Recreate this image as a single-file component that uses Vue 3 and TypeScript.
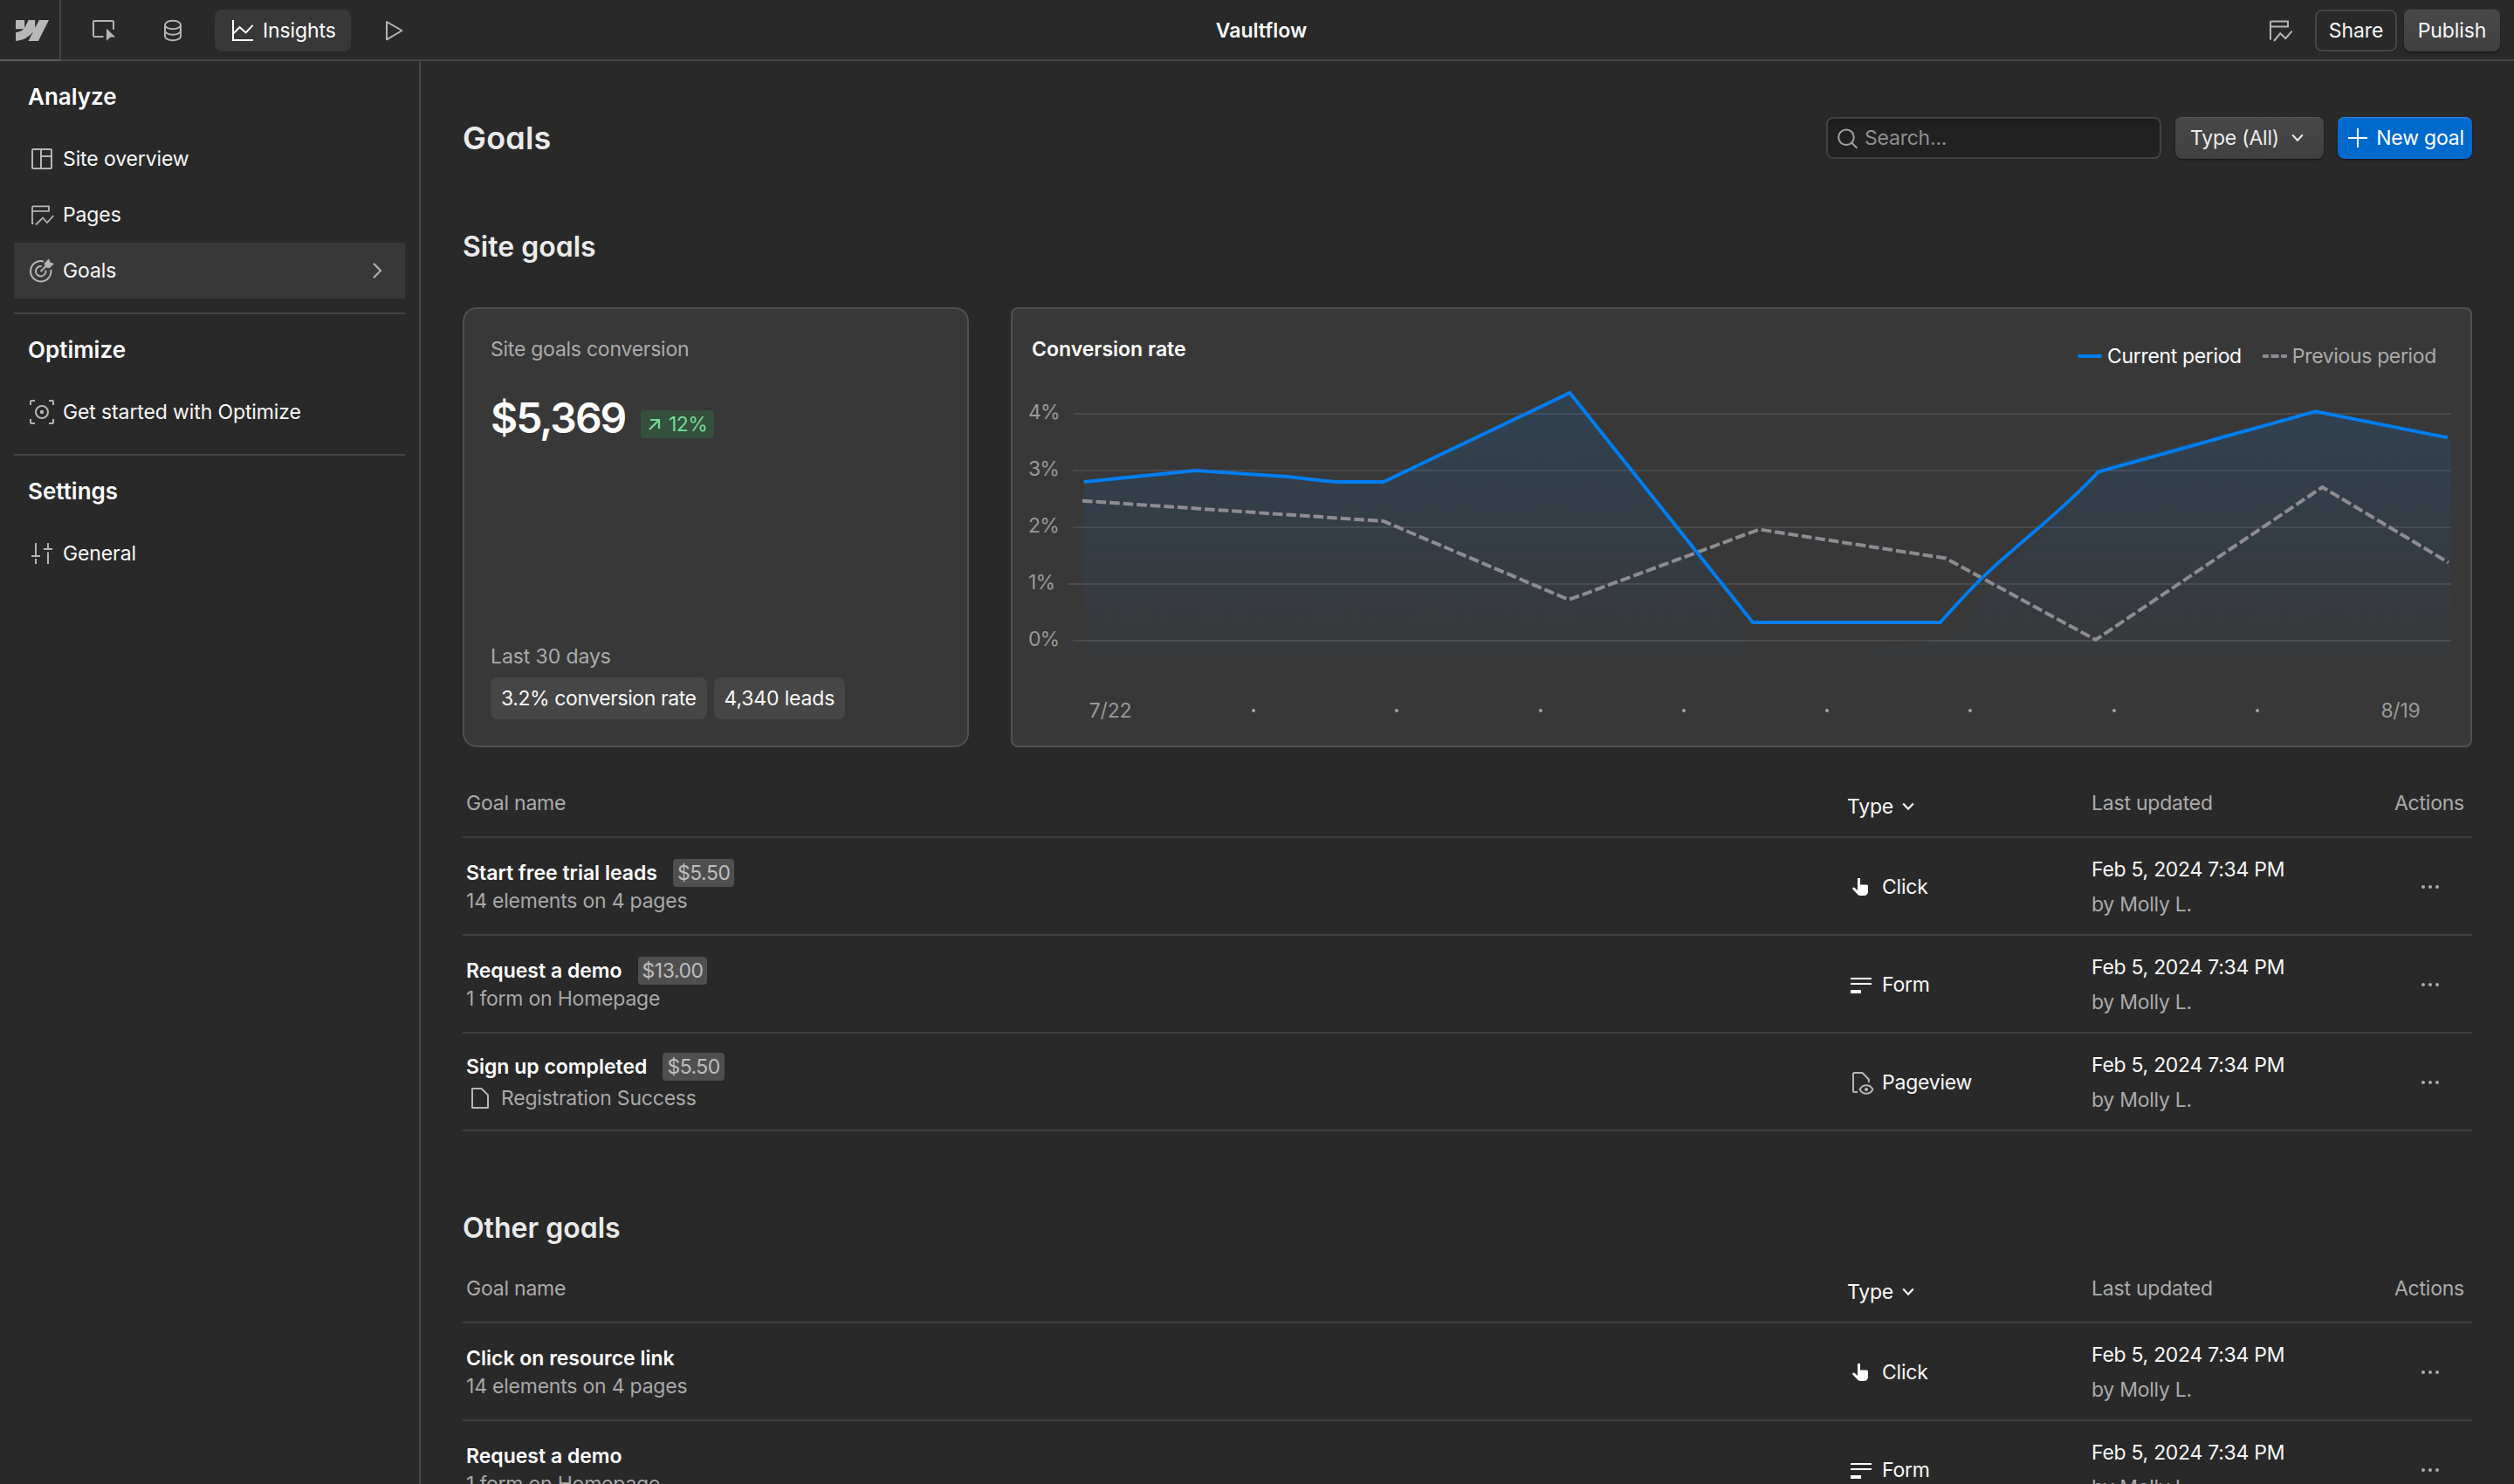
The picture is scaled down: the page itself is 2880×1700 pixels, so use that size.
<script setup lang="ts">
type GoalKind = 'Click' | 'Form' | 'Pageview'

interface Goal {
  name: string
  detail: string
  kind: GoalKind
  value?: string
  page?: boolean
}

interface GoalTable {
  id: string
  title: string | null
  goals: Goal[]
}

interface NavItem {
  label: string
  icon: string
  active?: boolean
}

const nav: { title: string; items: NavItem[] }[] = [
  {
    title: 'Analyze',
    items: [
      { label: 'Site overview', icon: 'layout' },
      { label: 'Pages', icon: 'pages' },
      { label: 'Goals', icon: 'goal', active: true },
    ],
  },
  { title: 'Optimize', items: [{ label: 'Get started with Optimize', icon: 'optimize' }] },
  { title: 'Settings', items: [{ label: 'General', icon: 'sliders' }] },
]

const tables: GoalTable[] = [
  {
    id: 'site',
    title: null,
    goals: [
      { name: 'Start free trial leads', detail: '14 elements on 4 pages', kind: 'Click', value: '$5.50' },
      { name: 'Request a demo', detail: '1 form on Homepage', kind: 'Form', value: '$13.00' },
      { name: 'Sign up completed', detail: 'Registration Success', kind: 'Pageview', value: '$5.50', page: true },
    ],
  },
  {
    id: 'other',
    title: 'Other goals',
    goals: [
      { name: 'Click on resource link', detail: '14 elements on 4 pages', kind: 'Click' },
      { name: 'Request a demo', detail: '1 form on Homepage', kind: 'Form' },
    ],
  },
]

const ticks = ['4%', '3%', '2%', '1%', '0%']
const dates = ['7/22', '', '', '', '', '', '', '', '', '8/19']
</script>

<template>
  <div class="app">
    <header class="topbar">
      <div class="brand">
        <svg width="38" height="24" viewBox="0 0 1080 674" preserveAspectRatio="none" fill="#b8b8b8">
          <path d="M1080 0L735.4 673.7H411.7L555.9 394.5H549.4C430.5 548.9 253 650.6 0 673.7V398.3S161.8 388.8 256.9 288.8H0V0H288.8V237.5H295.3L413.3 0H631.6V236H638.1L760.6 0Z" />
        </svg>
      </div>
      <div class="tools">
        <svg class="ic t1" viewBox="0 0 32 32">
          <path d="M28 14.7V6a1 1 0 0 0-1-1H6a1 1 0 0 0-1 1v16a1 1 0 0 0 1 1h10.5" />
          <path class="solid" d="M20 13.8v14l4.6-4.2 5.6-.2z" />
        </svg>
        <svg class="ic t2" viewBox="0 0 32 32">
          <ellipse cx="16" cy="9.5" rx="9" ry="4.7" />
          <path d="M7 9.5v13c0 2.6 4 4.7 9 4.7s9-2.1 9-4.7v-13M7 16c0 2.600 4 4.700 9 4.700s9-2.100 9-4.700" />
        </svg>
        <div class="tab">
          <svg class="ic white" viewBox="0 0 32 32">
            <path d="M5 4v23h23M5.300 19.200l7.300-7 7 6.200 8-8.500" />
          </svg>
          <span>Insights</span>
        </div>
        <svg class="ic t3" viewBox="0 0 32 32">
          <path stroke-linejoin="round" d="M9 6v20.300L26.500 16z" />
        </svg>
      </div>
      <div class="site-name">Vaultflow</div>
      <div class="right">
        <svg class="ic" viewBox="0 0 32 32">
          <path d="M5 26.500V6.500a1 1 0 0 1 1-1h19v6H5M9 28l7.300-8.700 6 5.700 7.300-8.300" />
        </svg>
        <button class="btn outline">Share</button>
        <button class="btn raised publish">Publish</button>
      </div>
    </header>

    <div class="body">
      <nav class="sidebar">
        <section v-for="group in nav" :key="group.title">
          <h2>{{ group.title }}</h2>
          <div v-for="item in group.items" :key="item.label" class="nav-item" :class="{ active: item.active }">
            <svg class="ic" viewBox="0 0 32 32">
              <path v-if="item.icon === 'layout'" d="M6 5h20a1 1 0 0 1 1 1v20a1 1 0 0 1-1 1H6a1 1 0 0 1-1-1V6a1 1 0 0 1 1-1zM15 5v22M15 13h12" />
              <path v-else-if="item.icon === 'pages'" stroke-width="1.8" d="M6.300 26H5V7.300a1 1 0 0 1 1-1h18v5.500H5M9 27.500l8-8 5 5.500 7.300-8" />
              <template v-else-if="item.icon === 'goal'">
                <path d="M18 5.500A11.700 11.700 0 1 0 26.300 15M15.800 11A5.800 5.800 0 1 0 20.400 15.600M14.500 17l6.500-6.500" />
                <path class="solid" d="M18.700 7.700L24 2.300l1.500 4.200L30 8l-5.300 5.300-5-1z" />
              </template>
              <template v-else-if="item.icon === 'optimize'">
                <path d="M3 8V4a1 1 0 0 1 1-1h4M24 3h4a1 1 0 0 1 1 1v4M29 24v4a1 1 0 0 1-1 1h-4M8 29H4a1 1 0 0 1-1-1v-4" />
                <circle cx="16" cy="16" r="7" />
                <circle class="solid" cx="16" cy="16" r="2.200" />
              </template>
              <path v-else d="M9 4v15M4 19h10M9 22v6M23 4v7M18 11h10M23 14.500V28" />
            </svg>
            <span>{{ item.label }}</span>
            <svg v-if="item.active" class="ic caret" viewBox="0 0 32 32"><path d="M12 7.800l8 8.200-8 8.200" /></svg>
          </div>
        </section>
      </nav>

      <main class="main">
        <div class="page-head">
          <h1>Goals</h1>
          <label class="search">
            <svg class="ic" viewBox="0 0 32 32"><circle cx="15" cy="15.300" r="8.800" /><path d="M21.300 21.600l6.200 6.200" /></svg>
            <span>Search...</span>
          </label>
          <button class="btn raised filter">
            <span>Type (All)</span>
            <svg width="14" height="10" viewBox="0 0 14 10"><path d="M1.200 1.500L7 7.700l5.800-6.200" /></svg>
          </button>
          <button class="btn primary">
            <svg width="22" height="22" viewBox="0 0 22 22"><path d="M11 0v22M0 11h22" /></svg>
            <span>New goal</span>
          </button>
        </div>

        <h3 class="sub-title">Site goals</h3>

        <div class="cards">
          <section class="card summary">
            <p class="muted">Site goals conversion</p>
            <div class="amount">
              <strong>$5,369</strong>
              <span class="trend">
                <svg width="14" height="14" viewBox="0 0 14 14"><path d="M2 2h10v10M12 2L1 13" /></svg>
                <span>12%</span>
              </span>
            </div>
            <p class="muted last">Last 30 days</p>
            <div class="chips">
              <span class="rate">3.2% conversion rate</span>
              <span>4,340 leads</span>
            </div>
          </section>

          <section class="card chart">
            <div class="chart-head">
              <h4>Conversion rate</h4>
              <div class="legend">
                <svg width="28" height="4" viewBox="0 0 28 4"><rect width="28" height="4" rx="2" fill="#007df0" /></svg>
                <span class="now">Current period</span>
                <svg width="28" height="4" viewBox="0 0 28 4" fill="#8e8c93">
                  <rect width="7" height="4" rx="1" /><rect x="9.500" width="9" height="4" /><rect x="21" width="7" height="4" rx="1" />
                </svg>
                <span class="prev">Previous period</span>
              </div>
            </div>
            <div class="plot">
              <div v-for="t in ticks" :key="t" class="tick"><span>{{ t }}</span><i /></div>
            </div>
            <div class="axis">
              <span v-for="(d, i) in dates" :key="i"><template v-if="d">{{ d }}</template><i v-else /></span>
            </div>
            <svg class="series" viewBox="1160 354 1670 500">
              <defs>
                <linearGradient id="area" gradientUnits="userSpaceOnUse" x1="0" y1="450" x2="0" y2="778">
                  <stop offset="0" stop-color="#007df0" stop-opacity="0.14" />
                  <stop offset="1" stop-color="#007df0" stop-opacity="0" />
                </linearGradient>
              </defs>
              <path fill="url(#area)" d="M1241.600 778V552L1369.600 539L1478 546L1530 551.700H1585L1798.400 450L1943 630L2016 757L2240 731L2292 655L2350 598L2404 535L2652.700 471L2808 503V778Z" />
              <path class="previous" d="M1240 573.700L1584.800 597L1797.200 687L2015.300 606.500L2229 639.500L2400.700 733L2660.500 558L2805 644.500" />
              <path class="current" d="M1241.600 552L1369.600 539L1478 546.300Q1520 551.800 1536 552H1585L1798.400 450L2007.900 713H2222.800Q2265 665 2297 638C2328 610 2362 585 2404 540.500L2652.700 471.300L2804 501.300" />
            </svg>
          </section>
        </div>

        <template v-for="table in tables" :key="table.id">
          <h3 v-if="table.title" class="sub-title other">{{ table.title }}</h3>
          <div class="table" :class="{ first: !table.title }">
            <div class="row head">
              <span>Goal name</span>
              <span class="sort">
                Type
                <svg width="14" height="10" viewBox="0 0 14 10"><path d="M1.200 1.500L7 7.700l5.800-6.200" /></svg>
              </span>
              <span>Last updated</span>
              <span class="actions">Actions</span>
            </div>
            <div v-for="goal in table.goals" :key="goal.name" class="row">
              <div class="goal">
                <div class="goal-name">
                  <b>{{ goal.name }}</b>
                  <span v-if="goal.value" class="value">{{ goal.value }}</span>
                </div>
                <div class="goal-detail" :class="{ page: goal.page }">
                  <svg v-if="goal.page" class="ic" viewBox="0 0 32 32">
                    <path d="M7 5h10.500L25 12.500V27H7z" stroke-linejoin="round" />
                  </svg>
                  <span>{{ goal.detail }}</span>
                </div>
              </div>
              <div class="kind">
                <svg v-if="goal.kind === 'Click'" class="ic white" viewBox="0 0 32 32">
                  <path class="solid" d="M12 6h3v7.500h7.500q1.500 0 1.500 1.500v6q0 5-5 5h-3.500q-2 0-3.500-1.500l-5.500-5.700a1.400 1.400 0 0 1 2.200-1.800L12 20z" />
                </svg>
                <svg v-else-if="goal.kind === 'Form'" class="ic white" viewBox="0 0 32 32">
                  <path class="solid" d="M4 8h24v2H4zM4 14h24v2H4zM4 22h12v4H4z" />
                </svg>
                <svg v-else class="ic" viewBox="0 0 32 32">
                  <path d="M12 27H8a1 1 0 0 1-1-1V6a1 1 0 0 1 1-1h9.500l7.300 7.500V16M14.500 24c3.500-6.400 11.500-6.400 15 0-3.500 6.400-11.500 6.400-15 0z" stroke-linejoin="round" />
                  <circle class="solid" cx="22" cy="24" r="2.100" />
                </svg>
                <span>{{ goal.kind }}</span>
              </div>
              <div class="updated">
                <div>Feb 5, 2024 7:34 PM</div>
                <div class="by">by Molly L.</div>
              </div>
              <div class="more"><i /><i /><i /></div>
            </div>
          </div>
        </template>
      </main>
    </div>
  </div>
</template>

<style>
body {
  background: #292929;
  overflow: hidden;
}
</style>

<style scoped>
.app {
  display: flex;
  flex-direction: column;
  width: 2880px;
  height: 1700px;
  overflow: hidden;
  background: #292929;
  color: #f8f8f8;
  font: 400 23px/32px Inter, 'Noto Sans', sans-serif;
  letter-spacing: -0.22px;
}
.app * { box-sizing: border-box; }
h1, h2, h3, h4, p { margin: 0; }
b, strong, h4 { font-weight: 600; letter-spacing: 0; }
.ic {
  flex: none;
  width: 32px;
  height: 32px;
  fill: none;
  stroke: #b5b5b5;
  stroke-width: 2;
  color: #b5b5b5;
}
.ic.white { stroke: #fff; color: #fff; }
.solid { fill: currentColor; stroke: none; }

.topbar {
  position: relative;
  flex: none;
  display: flex;
  align-items: center;
  height: 70px;
  border-bottom: 2px solid #464646;
  letter-spacing: -0.1px;
}
.brand {
  display: flex;
  align-items: center;
  width: 70px;
  height: 70px;
  margin-bottom: -2px;
  padding: 2px 0 0 18px;
  border-right: 2px solid #464646;
  border-bottom: 2px solid #5e5e5e;
}
.tools { display: flex; align-items: center; padding-top: 2px; }
.t1 { margin-left: 32px; }
.t2 { margin-left: 48px; }
.t3 { margin-left: 32px; }
.tab {
  display: flex;
  align-items: center;
  gap: 7px;
  width: 156px;
  height: 48px;
  margin-left: 32px;
  padding-left: 16px;
  border-radius: 8px;
  background: #383838;
  color: #fff;
}
.site-name {
  position: absolute;
  left: 0;
  right: 0;
  top: 19px;
  padding-left: 10px;
  text-align: center;
  font-weight: 600;
  letter-spacing: 0;
}
.right {
  display: flex;
  align-items: center;
  gap: 8px;
  margin-left: auto;
  padding: 2px 16px 0 0;
}
.right .ic { margin-right: 16px; }
.btn {
  display: flex;
  align-items: center;
  justify-content: center;
  height: 48px;
  padding: 0;
  border: 0;
  border-radius: 8px;
  color: #f8f8f8;
  font: inherit;
  letter-spacing: inherit;
}
.btn svg { fill: none; stroke: currentColor; stroke-width: 2; }
.outline { width: 94px; border: 2px solid #464646; background: none; }
.raised {
  background: linear-gradient(#484848, #404040);
  box-shadow: inset 0 1px 0 #555, 0 1px 2px rgba(0, 0, 0, 0.6);
}
.publish { width: 110px; }

.body { display: flex; flex: 1; min-height: 0; }
.sidebar {
  flex: none;
  width: 482px;
  padding: 0 16px;
  border-right: 2px solid #464646;
  letter-spacing: -0.12px;
}
.sidebar section { padding-bottom: 16px; }
.sidebar section + section { border-top: 2px solid #464646; }
h2 {
  height: 80px;
  padding: 25px 0 0 16px;
  color: #fff;
  font-size: 26px;
  line-height: 32px;
  font-weight: 600;
  letter-spacing: 0;
}
.nav-item {
  display: flex;
  align-items: center;
  gap: 8px;
  height: 64px;
  padding: 0 16px;
}
.nav-item.active { background: #383838; }
.caret { margin-left: auto; }

.main { flex: 1; min-width: 0; padding: 64px 48px 0; }
.page-head { display: flex; align-items: center; height: 48px; }
h1, .sub-title {
  color: #ebebeb;
  font-weight: 600;
  letter-spacing: 0;
  font-feature-settings: 'cv11';
}
h1 { margin-right: auto; font-size: 36px; line-height: 48px; letter-spacing: 0.2px; }
.sub-title { margin: 81px 0 49px; font-size: 32px; line-height: 40px; }
.sub-title.other { margin: 91px 0 9px; }
.search {
  display: flex;
  align-items: center;
  gap: 4px;
  width: 384px;
  height: 48px;
  padding-left: 6px;
  border: 2px solid #424242;
  border-radius: 8px;
  background: linear-gradient(#1c1c1c, #212121 30%);
  color: #8f8f8f;
}
.search .ic { stroke: #a0a0a0; }
.filter { gap: 14px; width: 170px; margin-left: 16px; padding-right: 6px; color: #ebebeb; }
.primary {
  gap: 10px;
  width: 154px;
  margin-left: 16px;
  padding-left: 3px;
  background: #006acc;
  box-shadow: inset 0 1px 0 #2a86dc, 0 1px 2px rgba(0, 0, 0, 0.6);
  color: #fff;
}

.cards { display: flex; gap: 48px; height: 504px; letter-spacing: -0.25px; }
.card { border: 2px solid #505050; background: #383838; }
.summary {
  display: flex;
  flex-direction: column;
  width: 580px;
  padding: 30px;
  border-radius: 16px;
}
.muted { color: #ababab; }
.amount { display: flex; align-items: flex-start; margin-top: 33px; }
.amount strong {
  width: 172px;
  color: #fff;
  font-size: 48px;
  line-height: 60px;
  letter-spacing: -2px;
}
.trend {
  display: flex;
  align-items: center;
  gap: 9px;
  height: 32px;
  width: 84px;
  margin-top: 21px;
  padding-left: 9px;
  border-radius: 4px;
  background: #35503d;
  color: #6fdd94;
  letter-spacing: -0.6px;
}
.trend svg { fill: none; stroke: currentColor; stroke-width: 2.200; }
.last { margin-top: auto; letter-spacing: -0.1px; }
.chips { display: flex; gap: 8px; margin-top: 8px; letter-spacing: -0.17px; }
.chips .rate { letter-spacing: -0.42px; }
.chips span {
  height: 48px;
  padding: 0 12px;
  border-radius: 8px;
  background: #464646;
  line-height: 48px;
}

.chart {
  position: relative;
  display: flex;
  flex-direction: column;
  flex: 1;
  border-radius: 8px;
}
.chart-head {
  display: flex;
  justify-content: space-between;
  height: 87px;
  padding: 30px 39px 0 22px;
}
.chart-head h4 { font-size: 23px; color: #fff; }
.legend { display: flex; align-items: center; height: 32px; margin-top: 8px; letter-spacing: -0.35px; }
.now { margin: 0 24px 0 6px; color: #fff; }
.prev { margin-left: 6px; color: #ababab; }
.plot { padding: 0 22px 0 18px; }
.tick { display: flex; gap: 16px; height: 65px; color: #999; letter-spacing: -0.9px; }
.tick span { margin-top: 15px; }
.tick i { flex: 1; height: 2px; margin-top: 32px; background: #4a4a4c; }
.axis {
  display: flex;
  justify-content: space-between;
  height: 32px;
  margin: 32px 56px 0 88px;
  color: #999;
}
.axis span { display: flex; align-items: center; justify-content: center; width: 48px; }
.axis i { width: 4px; height: 4px; border-radius: 50%; background: #a5a5a5; }
.series {
  position: absolute;
  inset: 0;
  width: 1670px;
  height: 500px;
  fill: none;
  stroke-width: 4;
}
.previous { stroke: #8e8c93; stroke-dasharray: 11.600 4; }
.current { stroke: #007df0; }

.table.first { margin-top: 24px; }
.row {
  display: grid;
  grid-template-columns: 1fr 280px 280px 156px;
  align-items: center;
  height: 112px;
  padding-left: 4px;
  box-shadow: inset 0 -2px 0 #3e3e3e;
}
.row.head { align-items: start; height: 80px; padding-top: 24px; color: #ababab; }
.row .sort { display: flex; align-items: center; gap: 10px; margin-top: 4px; color: #f8f8f8; }
.sort svg { fill: none; stroke: currentColor; stroke-width: 2.200; }
.actions { padding-right: 9px; text-align: right; }
.goal-name { display: flex; }
.goal-name b { color: #fff; }
.value {
  height: 32px;
  margin-left: 18px;
  padding: 0 5px;
  border-radius: 4px;
  background: #4f4f4f;
  color: #bdbdbd;
  letter-spacing: -0.5px;
}
.goal-detail { display: flex; align-items: center; height: 32px; color: #a8a8a8; }
.goal-detail.page { gap: 8px; margin-top: 4px; }
.kind { display: flex; align-items: center; gap: 8px; }
.updated { line-height: 40px; letter-spacing: -0.28px; }
.by { color: #ababab; }
.more { display: flex; gap: 4px; justify-content: flex-end; padding-right: 38px; }
.more i { width: 4px; height: 4px; border-radius: 50%; background: #ababab; }
</style>
